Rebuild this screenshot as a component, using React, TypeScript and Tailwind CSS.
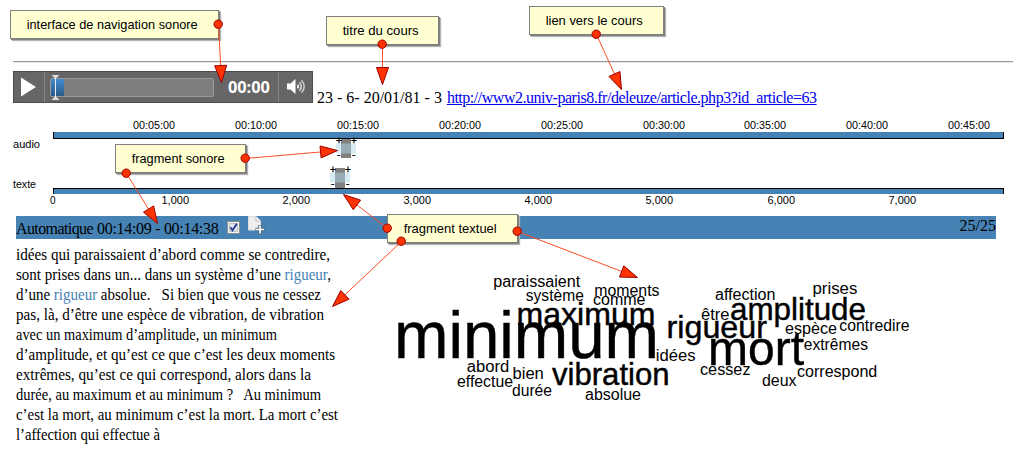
const timeTicks = [
  { x: 154, label: "00:05:00" },
  { x: 256, label: "00:10:00" },
  { x: 358, label: "00:15:00" },
  { x: 460, label: "00:20:00" },
  { x: 562, label: "00:25:00" },
  { x: 664, label: "00:30:00" },
  { x: 765, label: "00:35:00" },
  { x: 867, label: "00:40:00" },
  { x: 969, label: "00:45:00" },
];

const charTicks = [
  { x: 175, label: "1,000" },
  { x: 296, label: "2,000" },
  { x: 417, label: "3,000" },
  { x: 538, label: "4,000" },
  { x: 659, label: "5,000" },
  { x: 781, label: "6,000" },
  { x: 902, label: "7,000" },
];

// [word, left, right, baseline, font size]
const words: [string, number, number, number, number][] = [
  ["paraissaient", 493.3, 580.3, 287, 16],
  ["système", 525.8, 583.8, 301, 16],
  ["moments", 594.3, 659.5, 296, 16],
  ["comme", 593, 645.5, 305, 16],
  ["maximum", 516.5, 655.5, 324.5, 32],
  ["minimum", 394, 659, 358, 66],
  ["vibration", 552, 669.5, 385, 32],
  ["rigueur", 666.5, 767, 338, 32],
  ["amplitude", 730, 866, 320, 32],
  ["mort", 708, 804, 365, 49],
  ["abord", 466.8, 509.3, 372, 16],
  ["bien", 512.5, 543.8, 379, 16],
  ["effectue", 457, 513, 387, 16],
  ["durée", 512, 552, 396, 16],
  ["absolue", 585, 641, 400, 16],
  ["idées", 655.8, 695.5, 361, 16],
  ["affection", 715, 775.5, 300, 16],
  ["prises", 812.5, 857.3, 294, 16],
  ["être", 701, 729.5, 320, 16],
  ["espèce", 785, 837, 334, 16],
  ["contredire", 839.3, 909.5, 331, 16],
  ["extrêmes", 803.8, 868, 350, 16],
  ["cessez", 700, 750.5, 375, 16],
  ["deux", 762, 796.5, 386, 16],
  ["correspond", 797, 877.3, 377, 16],
];

const arrows = [
  [218, 24, 221, 82],
  [382, 44, 382, 84],
  [596, 34, 621, 89],
  [245, 158, 337, 150],
  [126, 173, 157, 223],
  [387, 228, 343, 194],
  [401, 241, 332, 306],
  [517, 231, 637, 277],
];

function Arrow({ p }: { p: number[] }) {
  const [x1, y1, x2, y2] = p;
  const d = Math.hypot(x2 - x1, y2 - y1);
  const ux = (x2 - x1) / d;
  const uy = (y2 - y1) / d;
  const bx = x2 - ux * 17;
  const by = y2 - uy * 17;
  const head = `${x2},${y2} ${bx - uy * 6},${by + ux * 6} ${bx + uy * 6},${by - ux * 6}`;
  return (
    <g>
      <line x1={x1 + 0.5} y1={y1 + 0.5} x2={bx + 0.5} y2={by + 0.5} stroke="#ff4f28" strokeWidth="1" />
      <polygon points={head} transform="translate(.5 .5)" fill="#ff3300" stroke="#990000" />
      <circle cx={x1 + 0.2} cy={y1 + 0.2} r="4.2" fill="#ff3300" stroke="#990000" />
    </g>
  );
}

function Note({ place, text, width }: { place: string; text: string; width: number }) {
  return (
    <div className={`absolute h-[29px] border border-[#808080] bg-[#ffffd2] shadow-[1px_1px_0_#808080,2px_2px_1px_#b4b4b4] ${place}`}>
      <svg className="block h-full w-full">
        <text x="15.7" y="18" textLength={width} lengthAdjust="spacingAndGlyphs" className="fill-black text-[13px]">{text}</text>
      </svg>
    </div>
  );
}

function Fragment({ x, y, h }: { x: number; y: number; h: number }) {
  return (
    <g>
      <rect x={x + 5} y={y} width="10" height={h} fill="#808080" />
      <rect x={x} y={y + 4.5} width="20" height="10" fill="#add8e6" fillOpacity=".5" />
      <g className="text-[10px]" fill="#000" stroke="#000" strokeWidth=".3">
        <text x={x} y={y + 5}>+</text>
        <text x={x + 15} y={y + 5}>+</text>
        <text x={x + 1} y={y + 19}>-</text>
        <text x={x + 16} y={y + 19}>-</text>
      </g>
    </g>
  );
}

function Player() {
  return (
    <div className="flex h-8 w-[300px] items-stretch border border-[#4c4c4c] bg-[#666]">
      <div className="flex w-[31px] items-center border-r border-[#858585] pl-[7px]">
        <svg width="15" height="20" viewBox="0 0 15 20"><path d="M0 0.5L15 10L0 19.5Z" fill="#fff" /></svg>
      </div>
      <div className="relative ml-[5px] mt-[6px] h-[19px] w-[164px] rounded-[2px] border border-[#999] bg-[#7d7d7d]">
        <div className="h-full w-[13px] bg-linear-to-b from-[#438cd3] to-[#2b5a87]" />
        <svg className="absolute -top-[5px] left-0" width="9" height="27" viewBox="0 0 9 27">
          <path d="M0.5 1H8.5L4.5 5ZM0.5 26H8.5L4.5 22Z" fill="#ddd" />
          <path d="M4.5 3V24" stroke="#eee" />
        </svg>
      </div>
      <div className="flex w-[64px] items-center pl-[14px] font-['Open_Sans',sans-serif] text-[16.3px] font-bold text-white">00:00</div>
      <div className="flex flex-1 items-center border-l border-[#858585] pl-[8px]">
        <svg width="20" height="18" viewBox="0 0 20 18">
          <path d="M0 5.5H3.5L8.5 1V16L3.5 11.5H0Z" fill="#fff" />
          <path d="M10.5 6.7Q12.2 8.5 10.5 10.3" fill="none" stroke="#fff" strokeWidth="1.5" />
          <path d="M12.5 4.3Q16 8.5 12.5 12.7" fill="none" stroke="#ddd" strokeWidth="1.5" />
          <path d="M14.5 2.2Q20 8.5 14.5 14.8" fill="none" stroke="#ccc" strokeWidth="1.5" />
        </svg>
      </div>
    </div>
  );
}

function Timeline() {
  return (
    <svg className="block h-[106px] w-[1021px] shrink-0" viewBox="0 110 1021 106">
      <g className="text-[10px]" fill="#000">
        {timeTicks.map((t) => (
          <text key={t.label} x={t.x - 21} y="129" textLength="42" lengthAdjust="spacingAndGlyphs">{t.label}</text>
        ))}
        {charTicks.map((t) => (
          <text key={t.label} x={t.x - 13.5} y="204" textLength="27.5" lengthAdjust="spacingAndGlyphs">{t.label}</text>
        ))}
        <text x="50" y="204">0</text>
        <text x="13" y="148" textLength="27" lengthAdjust="spacingAndGlyphs">audio</text>
        <text x="13" y="188" textLength="23" lengthAdjust="spacingAndGlyphs">texte</text>
      </g>
      <rect x="53" y="132" width="951" height="7" fill="#000" />
      <rect x="53" y="132" width="950" height="6" fill="#4682b4" />
      <rect x="53" y="188" width="951" height="6" fill="#000" />
      <rect x="54" y="189" width="949" height="5" fill="#4682b4" />
      <rect x="53" y="132" width="1" height="6" fill="#000" />
      <Fragment x={336} y={139} h={19} />
      <Fragment x={330} y={168} h={20} />
    </svg>
  );
}

const lines = [
  { w: 314, t: "idées qui paraissaient d’abord comme se contredire," },
  { w: 315, t: "sont prises dans un... dans un système d’une |rigueur|," },
  { w: 305, t: "d’une |rigueur| absolue.\u00a0\u00a0 Si bien que vous ne cessez" },
  { w: 308, t: "pas, là, d’être une espèce de vibration, de vibration" },
  { w: 261, t: "avec un maximum d’amplitude, un minimum" },
  { w: 319, t: "d’amplitude, et qu’est ce que c’est les deux moments" },
  { w: 295, t: "extrêmes, qu’est ce qui correspond, alors dans la" },
  { w: 305, t: "durée, au maximum et au minimum ?\u00a0\u00a0 Au minimum" },
  { w: 322, t: "c’est la mort, au minimum c’est la mort. La mort c’est" },
  { w: 144, t: "l’affection qui effectue à" },
];

export default function App() {
  return (
    <div className="relative flex h-[450px] w-[1021px] flex-col overflow-hidden bg-white font-['Liberation_Sans',sans-serif] text-black">
      <div className="ml-[13px] mt-[61px] h-[2px] w-[1000px] shrink-0 border-t border-[#999] bg-[#e8e8e8]" />
      <div className="flex h-[47px] shrink-0 pl-[13px] pt-2">
        <Player />
        <div className="ml-1 mt-[15px] flex gap-[5px] whitespace-nowrap font-['Liberation_Serif',serif] text-[16px] leading-6">
          <span>23 - 6- 20/01/81 - 3</span>
          <a className="tracking-[-0.475px] text-[#0000ee] underline" href="#cours">http://www2.univ-paris8.fr/deleuze/article.php3?id_article=63</a>
        </div>
      </div>
      <Timeline />
      <div className="ml-4 flex h-[23px] w-[980px] shrink-0 bg-[#4682b4] font-['Liberation_Serif',serif] text-[16px]">
        <div className="mt-[2px] flex w-[211px] gap-1 whitespace-nowrap leading-[22px]">
          <span className="w-[77px] tracking-[-0.6px]">Automatique</span>
          <span className="tracking-[-0.3px]">00:14:09 - 00:14:38</span>
        </div>
        <svg className="mt-[5px]" width="13" height="13" viewBox="0 0 13 13">
          <rect x=".5" y=".5" width="12" height="12" fill="#f2f2f2" stroke="#8e8f8f" />
          <rect x="2.5" y="2.5" width="8" height="8" fill="#e2e5e9" stroke="#bcc3ca" />
          <path d="M3.3 6.2L5.5 9.3L9.8 2.7" fill="none" stroke="#263f92" strokeWidth="1.8" />
        </svg>
        <svg className="ml-[8px]" width="18" height="19" viewBox="0 0 18 19">
          <path d="M.5 .5H8L12.5 5V14H.5Z" fill="#eee" stroke="#ddd" />
          <path d="M8 .5V5H12.5" fill="#fff" stroke="#bbb" />
          <path d="M12 9V18M7.5 13.5H16.5" stroke="#506b80" strokeWidth="3.6" />
          <path d="M12 9.5V17.5M8 13.5H16" stroke="#fff" strokeWidth="1.7" />
        </svg>
        <span className="ml-auto leading-5">25/25</span>
      </div>
      <div className="flex min-h-0 flex-1">
        <div className="w-[345px] shrink-0 pl-4 pt-[6px]">
          {lines.map((line) => (
            <svg key={line.t} className="block h-5 w-[329px] overflow-visible font-['Liberation_Serif',serif] text-[16px]">
              <text x="0" y="15" textLength={line.w} lengthAdjust="spacingAndGlyphs">
                {line.t.split("|").map((part, i) => (
                  <tspan key={i} fill={i % 2 ? "#4682b4" : "#000"}>{part}</tspan>
                ))}
              </text>
            </svg>
          ))}
        </div>
        <svg className="block h-[211px] w-[676px]" viewBox="345 239 676 211">
          {words.map(([word, left, right, base, size]) => (
            <text
              key={word}
              x={left}
              y={base}
              fontSize={size}
              textLength={right - left}
              lengthAdjust="spacingAndGlyphs"
              stroke="#000"
              strokeWidth={size > 16 ? 0.45 : 0}
            >
              {word}
            </text>
          ))}
        </svg>
      </div>
      <Note place="left-[10px] top-[10px] w-[209px]" text="interface de navigation sonore" width={171} />
      <Note place="left-[326px] top-[16px] w-[113px]" text="titre du cours" width={76} />
      <Note place="left-[529px] top-[6px] w-[135px]" text="lien vers le cours" width={97} />
      <Note place="left-[115px] top-[144px] w-[131px]" text="fragment sonore" width={93} />
      <Note place="left-[387px] top-[214px] w-[131px]" text="fragment textuel" width={93} />
      <svg className="pointer-events-none absolute inset-0" width="1021" height="450">
        {arrows.map((p) => <Arrow key={p.join()} p={p} />)}
      </svg>
    </div>
  );
}
